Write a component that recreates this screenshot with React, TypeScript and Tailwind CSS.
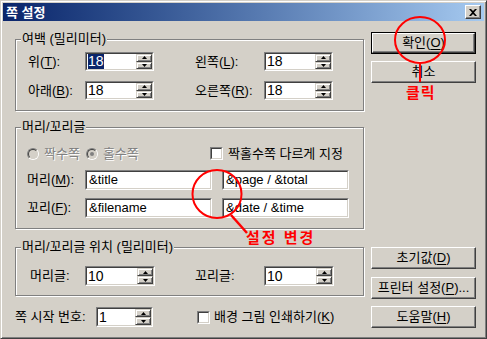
import type { ReactNode } from "react";

const FONT = "font-['Liberation_Sans','Noto_Sans_CJK_KR',sans-serif]";

function U({ children }: { children: ReactNode }) {
  return <span className="underline underline-offset-2">{children}</span>;
}

function Sunken({ className = "", children }: { className?: string; children?: ReactNode }) {
  return (
    <div className={`border border-t-[#808080] border-l-[#808080] border-r-white border-b-white ${className}`}>
      <div className="flex h-full w-full border border-t-[#404040] border-l-[#404040] border-r-[#d4d0c8] border-b-[#d4d0c8] bg-white">
        {children}
      </div>
    </div>
  );
}

function Arrow({ up }: { up?: boolean }) {
  return (
    <div className="flex flex-1 items-center justify-center border border-t-[#d4d0c8] border-l-[#d4d0c8] border-r-[#404040] border-b-[#404040] bg-[#d4d0c8] shadow-[inset_1px_1px_0_#fff,inset_-1px_-1px_0_#808080]">
      <svg width="5" height="3" viewBox="0 0 5 3">
        <polygon points={up ? "2.5,0 5,3 0,3" : "0,0 5,0 2.5,3"} fill="#000" />
      </svg>
    </div>
  );
}

function Spin({ value, className, selected }: { value: string; className: string; selected?: boolean }) {
  return (
    <Sunken className={className}>
      <div className="flex flex-1 items-center pl-[1px] text-[14px] leading-[15px]">
        {selected ? <span className="bg-[#0a246a] text-white">{value}</span> : value}
      </div>
      <div className="flex w-[16px] flex-col">
        <Arrow up />
        <Arrow />
      </div>
    </Sunken>
  );
}

function Field({ value }: { value: string }) {
  return (
    <Sunken className="h-[20px] w-[127px]">
      <div className="flex items-center pl-[2px] text-[13px]">{value}</div>
    </Sunken>
  );
}

function Group({ title, className, children }: { title: string; className: string; children: ReactNode }) {
  return (
    <div className={`relative border border-[#808080] shadow-[1px_1px_0_#fff,inset_1px_1px_0_#fff] ${className}`}>
      <span className="absolute left-[5px] top-[-8px] bg-[#d4d0c8] px-[1px] leading-[14px]">{title}</span>
      {children}
    </div>
  );
}

function Radio({ on }: { on?: boolean }) {
  return (
    <div className="h-[12px] w-[12px] rounded-full border border-t-[#808080] border-l-[#808080] border-r-white border-b-white">
      <div className="flex h-full w-full items-center justify-center rounded-full border border-t-[#404040] border-l-[#404040] border-r-[#d4d0c8] border-b-[#d4d0c8] bg-[#d4d0c8]">
        {on && <div className="h-[4px] w-[4px] rounded-full bg-[#808080]" />}
      </div>
    </div>
  );
}

function Btn({ children, def, className = "" }: { children: ReactNode; def?: boolean; className?: string }) {
  return (
    <div className={`h-[22px] w-[105px] ${def ? "border border-black" : ""} ${className}`}>
      <div className="flex h-full w-full items-center justify-center border border-t-white border-l-white border-r-[#404040] border-b-[#404040] shadow-[inset_-1px_-1px_0_#808080]">
        {children}
      </div>
    </div>
  );
}

export default function App() {
  return (
    <div
      className={`relative flex h-[339px] w-[487px] flex-col border border-t-[#d4d0c8] border-l-[#d4d0c8] border-r-[#404040] border-b-[#404040] bg-[#d4d0c8] p-[2px] text-[13px] text-black shadow-[inset_1px_1px_0_#fff,inset_-1px_-1px_0_#808080] ${FONT}`}
    >
      {/* title bar */}
      <div className="flex h-[18px] items-center bg-linear-to-r from-[#0a246a] to-[#a6caf0]">
        <span className="ml-[3px] text-[13px] font-bold leading-none text-white">쪽 설정</span>
        <div className="ml-auto mr-[3px] flex h-[14px] w-[16px] items-center justify-center border border-t-white border-l-white border-r-[#404040] border-b-[#404040] bg-[#d4d0c8] shadow-[inset_-1px_-1px_0_#808080]">
          <svg width="8" height="7" viewBox="0 0 8 7">
            <path d="M0 0H2L4 2L6 0H8L5 3.5L8 7H6L4 5L2 7H0L3 3.5Z" fill="#000" />
          </svg>
        </div>
      </div>

      <div className="flex flex-1">
        {/* left column */}
        <div className="ml-[12px] flex w-[349px] flex-col pt-[18px]">
          <Group title="여백 (밀리미터)" className="flex flex-col gap-[10px] pb-[10px] pl-[12px] pt-[12px]">
            <div className="flex h-[19px] items-center">
              <span className="w-[57px]">위(<U>T</U>):</span>
              <Spin value="18" selected className="h-[19px] w-[69px]" />
              <span className="ml-[41px] w-[69px]">왼쪽(<U>L</U>):</span>
              <Spin value="18" className="h-[19px] w-[69px]" />
            </div>
            <div className="flex h-[19px] items-center">
              <span className="w-[57px]">아래(<U>B</U>):</span>
              <Spin value="18" className="h-[19px] w-[69px]" />
              <span className="ml-[41px] w-[69px]">오른쪽(<U>R</U>):</span>
              <Spin value="18" className="h-[19px] w-[69px]" />
            </div>
          </Group>

          <Group title="머리/꼬리글" className="mt-[16px] flex flex-col pb-[10px] pl-[11px] pt-[19px]">
            <div className="flex h-[13px] items-center">
              <div className="flex w-[183px] items-center text-[#808080] [text-shadow:1px_1px_0_#fff]">
                <Radio />
                <span className="ml-[5px]">짝수쪽</span>
                <span className="ml-[6px]">
                  <Radio on />
                </span>
                <span className="ml-[5px]">홀수쪽</span>
              </div>
              <Sunken className="h-[13px] w-[13px]" />
              <span className="ml-[5px]">짝홀수쪽 다르게 지정</span>
            </div>
            <div className="mt-[10px] flex h-[20px] items-center">
              <span className="w-[58px]">머리(<U>M</U>):</span>
              <Field value="&title" />
              <span className="ml-[10px]">
                <Field value="&page / &total" />
              </span>
            </div>
            <div className="mt-[8px] flex h-[20px] items-center">
              <span className="w-[58px]">꼬리(<U>F</U>):</span>
              <Field value="&filename" />
              <span className="ml-[10px]">
                <Field value="&date / &time" />
              </span>
            </div>
          </Group>

          <Group title="머리/꼬리글 위치 (밀리미터)" className="mt-[18px] flex pb-[9px] pl-[14px] pt-[18px]">
            <div className="flex h-[20px] items-center">
              <span className="w-[55px]">머리글:</span>
              <Spin value="10" className="h-[20px] w-[70px]" />
              <span className="ml-[40px] w-[69px]">꼬리글:</span>
              <Spin value="10" className="h-[20px] w-[70px]" />
            </div>
          </Group>

          <div className="mt-[11px] flex h-[20px] items-center">
            <span className="w-[81px]">쪽 시작 번호:</span>
            <Spin value="1" className="h-[20px] w-[57px]" />
            <span className="ml-[44px]">
              <Sunken className="h-[13px] w-[13px]" />
            </span>
            <span className="ml-[4px]">
              배경 그림 인쇄하기(<U>K</U>)
            </span>
          </div>
        </div>

        {/* right column */}
        <div className="ml-[7px] flex w-[105px] flex-col pt-[11px]">
          <Btn def>
            확인(<U>O</U>)
          </Btn>
          <Btn className="mt-[7px]">취소</Btn>
          <Btn className="mt-[164px]">
            초기값(<U>D</U>)
          </Btn>
          <Btn className="mt-[8px]">
            프린터 설정(<U>P</U>)...
          </Btn>
          <Btn className="mt-[7px]">
            도움말(<U>H</U>)
          </Btn>
        </div>
      </div>

      {/* red annotations */}
      <div className="pointer-events-none absolute left-[-1px] top-[-1px] h-[339px] w-[487px]">
        <svg width="487" height="339" className="absolute left-0 top-0">
          <ellipse cx="420" cy="40" rx="25" ry="23" fill="none" stroke="#ff0000" strokeWidth="2" />
          <line x1="420" y1="63" x2="420" y2="82" stroke="#ff0000" strokeWidth="2" />
          <ellipse cx="217" cy="194" rx="24.5" ry="24" fill="none" stroke="#ff0000" strokeWidth="2" />
          <line x1="231" y1="215" x2="247" y2="233" stroke="#ff0000" strokeWidth="2.5" />
        </svg>
        <span className="absolute left-[406px] top-[84px] text-[15px] font-bold leading-[18px] tracking-[1px] text-[#ff0000]">
          클릭
        </span>
        <span className="absolute left-[246px] top-[229px] text-[15px] font-bold leading-[18px] tracking-[2px] text-[#ff0000]">
          설정 변경
        </span>
      </div>
    </div>
  );
}
